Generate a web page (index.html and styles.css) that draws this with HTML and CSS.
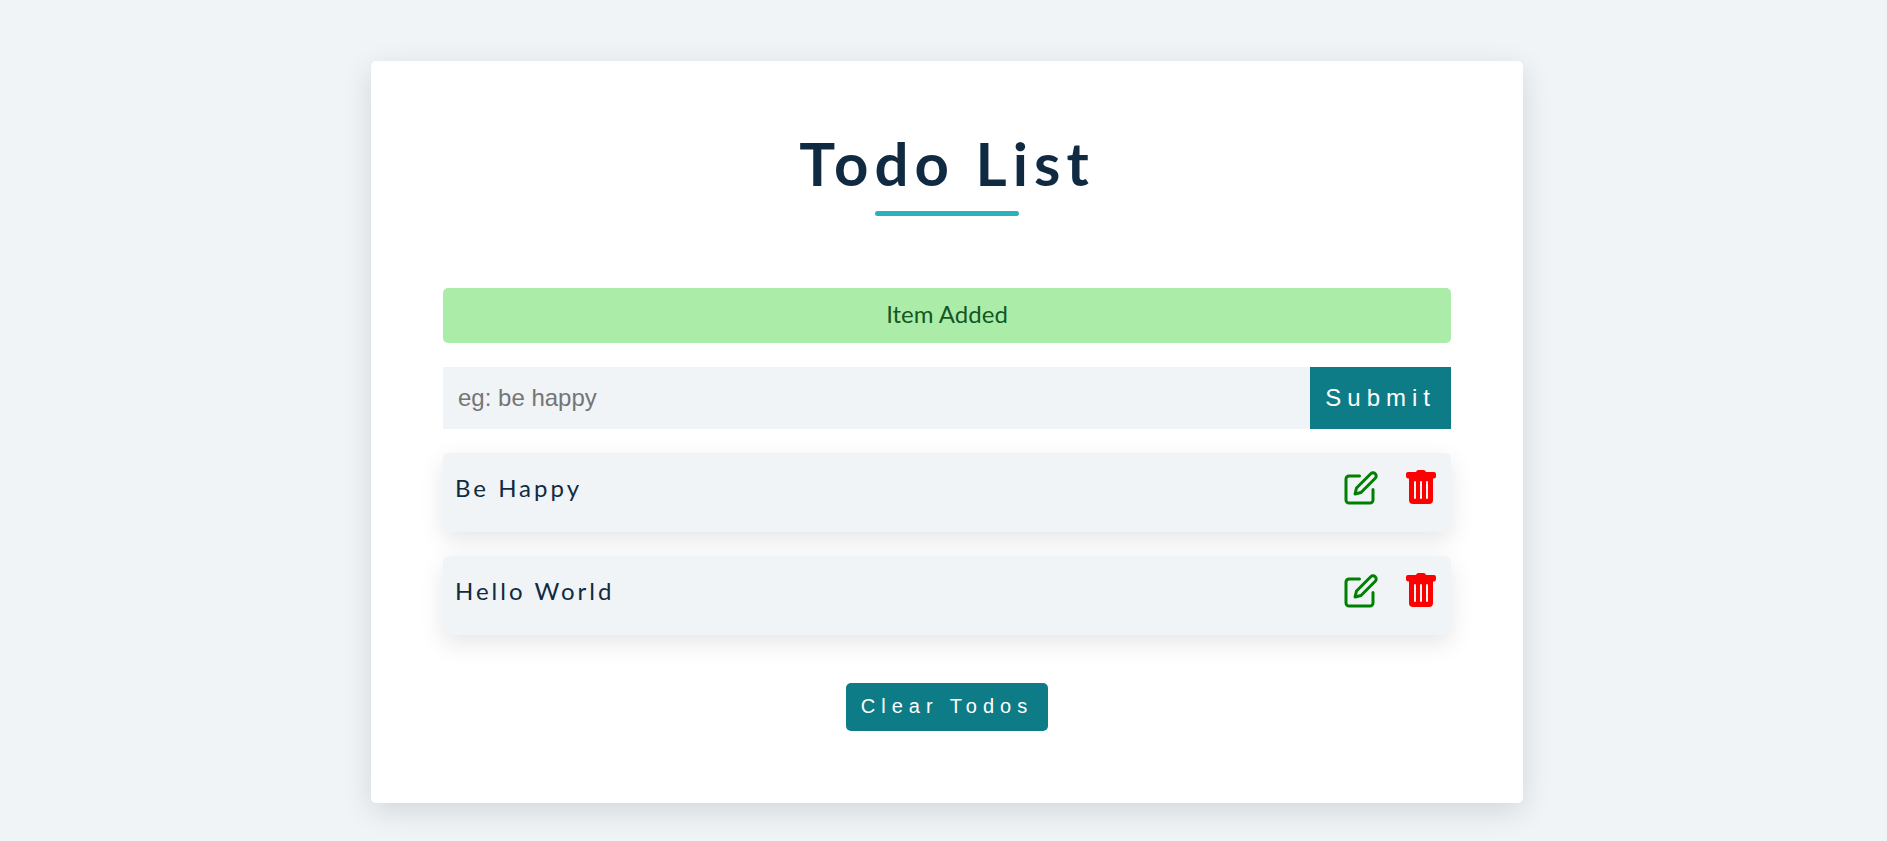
FILE: index.html
```html
<!DOCTYPE html>
<html lang="en">
<head>
<meta charset="utf-8">
<title>Todo List</title>
<link rel="stylesheet" href="styles.css">
</head>
<body>
<svg class="sprite" aria-hidden="true">
  <symbol id="edit" viewBox="0 0 24 24">
    <g fill="none" stroke="currentColor" stroke-width="2" stroke-linecap="round" stroke-linejoin="round">
      <path d="M11 4H4a2 2 0 0 0-2 2v14a2 2 0 0 0 2 2h14a2 2 0 0 0 2-2v-7"/>
      <path d="M18.500 2.500a2.121 2.121 0 0 1 3 3L12 15l-4 1 1-4 9.500-9.500z"/>
    </g>
  </symbol>
  <symbol id="trash" viewBox="0 0 36 36">
    <path fill="currentColor" fill-rule="evenodd" d="M5 2H13Q13.500 0 15.500 0H20.500Q22.500 0 23 2H31Q33 2 33 4V6Q33 8.500 30.500 8.500H30V30Q30 34 26 34H10Q6 34 6 30V8.500H5.500Q3 8.500 3 6V4Q3 2 5 2ZM11 12V28Q11 29 12 29T13 28V12Q13 11 12 11T11 12ZM17 12V28Q17 29 18 29T19 28V12Q19 11 18 11T17 12ZM23 12V28Q23 29 24 29T25 28V12Q25 11 24 11T23 12Z"/>
  </symbol>
</svg>
<main class="card">
  <header class="heading">
    <h1 class="title">Todo List</h1>
    <div class="underline"></div>
  </header>
  <p class="alert" role="status">Item Added</p>
  <form class="todo-form">
    <input class="todo-input" type="text" placeholder="eg: be happy" aria-label="New todo">
    <button class="submit-btn" type="submit">Submit</button>
  </form>
  <ul class="todo-list">
    <li class="todo">
      <span class="todo-name">Be Happy</span>
      <span class="actions">
        <button class="icon-btn edit" type="button" aria-label="Edit Be Happy"><svg class="icon"><use href="#edit"/></svg></button>
        <button class="icon-btn delete" type="button" aria-label="Delete Be Happy"><svg class="icon"><use href="#trash"/></svg></button>
      </span>
    </li>
    <li class="todo">
      <span class="todo-name">Hello World</span>
      <span class="actions">
        <button class="icon-btn edit" type="button" aria-label="Edit Hello World"><svg class="icon"><use href="#edit"/></svg></button>
        <button class="icon-btn delete" type="button" aria-label="Delete Hello World"><svg class="icon"><use href="#trash"/></svg></button>
      </span>
    </li>
  </ul>
  <button class="clear-btn" type="button">Clear Todos</button>
</main>
</body>
</html>
```
FILE: styles.css
```css
* {
  box-sizing: border-box;
  margin: 0;
  padding: 0;
}

body {
  background: #f0f4f7;
  color: #102a42;
  font-family: Lato, sans-serif;
  font-size: 24px;
  padding: 61px 24px 38px 31px;
}

button,
input {
  border: 0;
  font-family: "Liberation Sans", Arial, sans-serif;
}

button {
  cursor: pointer;
}

.sprite {
  display: none;
}

.card {
  display: flex;
  flex-direction: column;
  max-width: 1152px;
  margin: 0 auto;
  padding: 72px;
  background: #fff;
  border-radius: 5px;
  box-shadow: 0 8px 30px rgba(0, 0, 0, 0.12);
}

.heading {
  display: flex;
  flex-direction: column;
  align-items: center;
  margin-bottom: 72px;
}

.title {
  font-size: 60px;
  line-height: 60px;
  font-weight: 700;
  letter-spacing: 6px;
  margin-bottom: 18px;
}

.underline {
  width: 144px;
  height: 5px;
  border-radius: 3px;
  background: #2cb1bc;
}

.alert {
  padding: 11px 12px 14px;
  margin-bottom: 24px;
  line-height: 30px;
  text-align: center;
  color: #155724;
  background: #abeda8;
  border-radius: 5px;
}

.todo-form {
  display: flex;
  height: 62px;
  margin-bottom: 24px;
}

.todo-input {
  flex: 1;
  min-width: 0;
  padding: 0 15px;
  font-size: 24px;
  background: #f0f4f7;
}

.todo-input::placeholder {
  color: #757575;
}

.submit-btn {
  padding: 0 15px;
  font-size: 24px;
  letter-spacing: 6px;
  color: #fff;
  background: #0e7c86;
}

.todo-list {
  display: grid;
  gap: 24px;
  margin-bottom: 48px;
  list-style: none;
}

.todo {
  display: flex;
  justify-content: space-between;
  align-items: flex-start;
  min-height: 79px;
  padding: 17px 12px;
  background: #f0f4f7;
  border-radius: 6px;
  box-shadow: 0 8px 24px rgba(0, 0, 0, 0.1);
}

.todo-name {
  line-height: 36px;
  letter-spacing: 3px;
}

.actions {
  display: flex;
  gap: 24px;
}

.icon-btn {
  display: flex;
  background: none;
}

.icon {
  width: 36px;
  height: 36px;
}

.edit {
  color: #008000;
}

.delete {
  color: #ff0000;
}

.clear-btn {
  align-self: center;
  height: 48px;
  padding: 0 15px 2px;
  font-size: 20px;
  letter-spacing: 6px;
  color: #fff;
  background: #0e7c86;
  border-radius: 5px;
}
```
